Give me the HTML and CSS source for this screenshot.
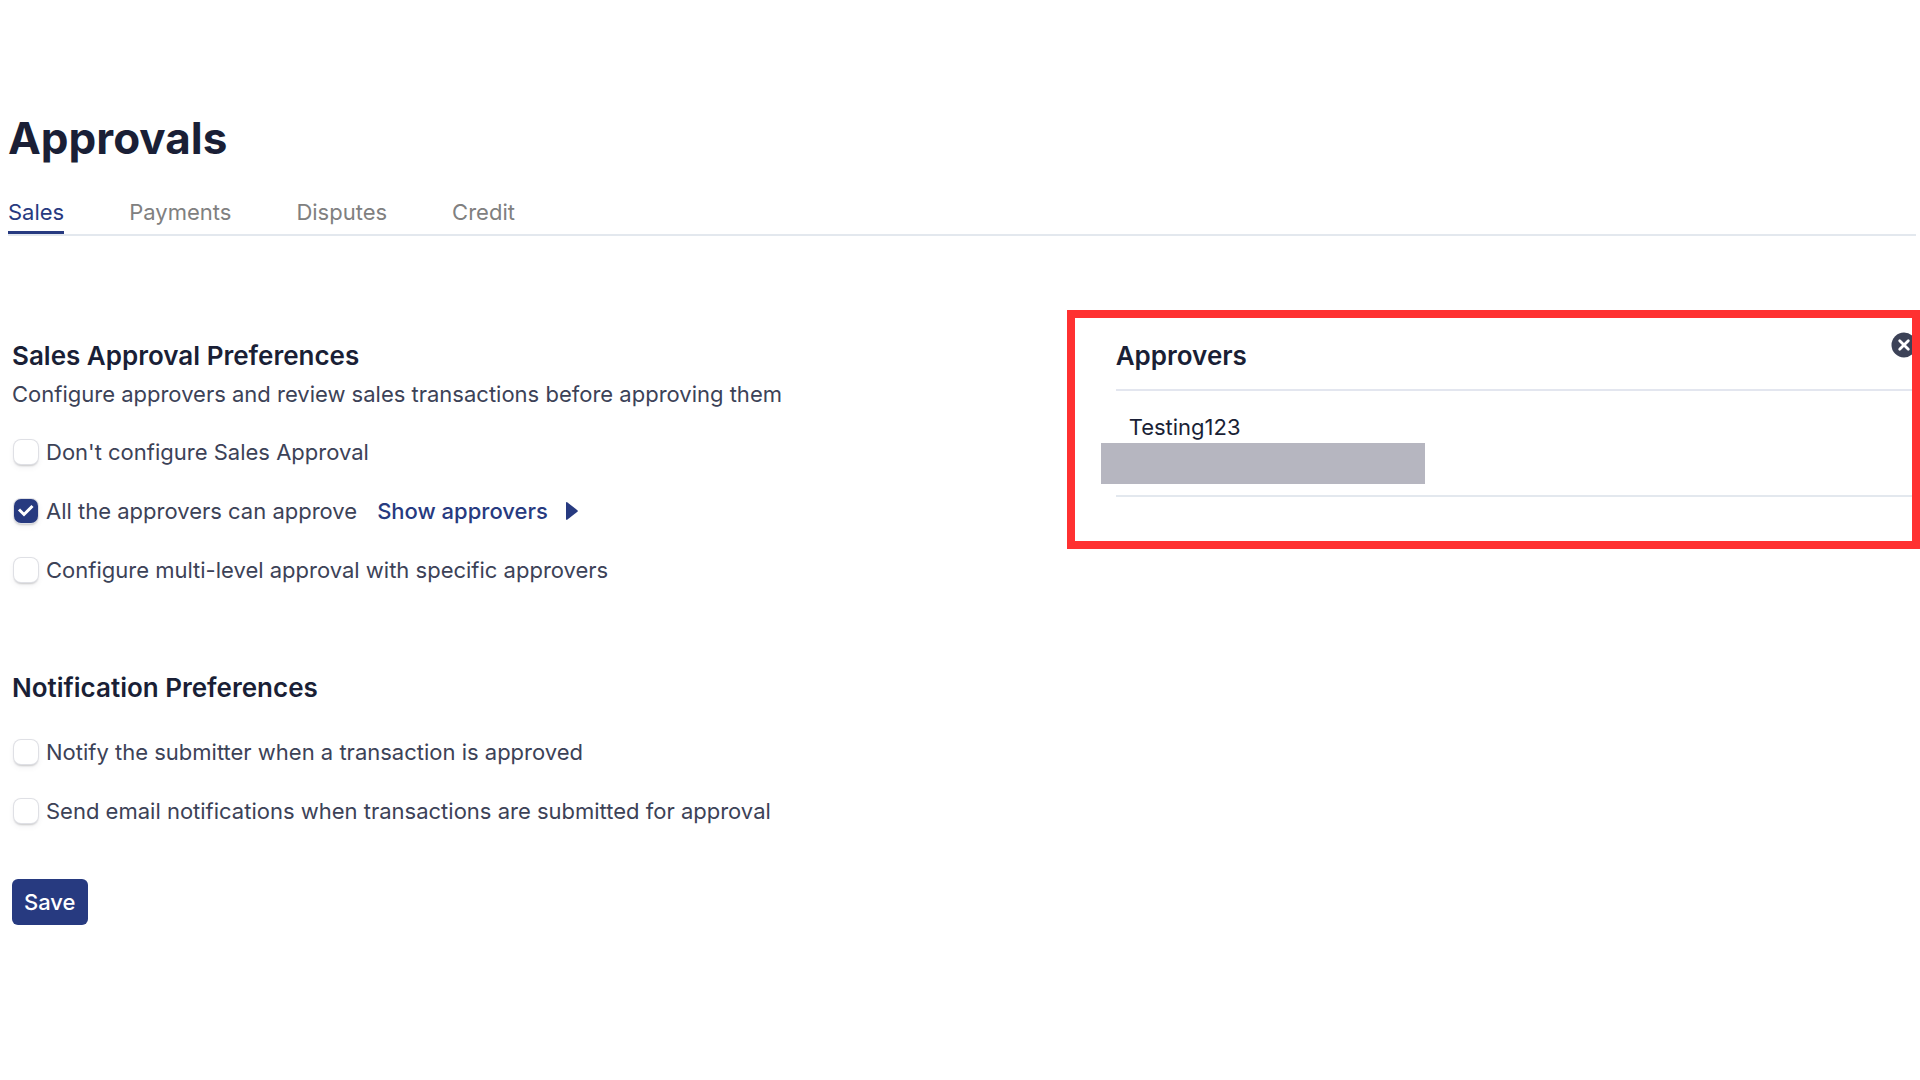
FILE: index.html
```
<!DOCTYPE html>
<html lang="en">

<head>
    <meta charset="UTF-8">
    <meta name="viewport" content="width=device-width, initial-scale=1.0">
    <title>Approvals</title>
    <link rel="stylesheet" href="styles.css">
</head>

<body>
    <header class="page-header">
        <h1>Approvals</h1>
        <nav class="tabs">
            <a class="tab active" href="#sales">Sales</a>
            <a class="tab" href="#payments">Payments</a>
            <a class="tab" href="#disputes">Disputes</a>
            <a class="tab" href="#credit">Credit</a>
        </nav>
    </header>

    <main class="content">
        <form class="preferences" id="preferencesForm">
            <section class="sales">
                <h2>Sales Approval Preferences</h2>
                <p class="description">Configure approvers and review sales transactions before approving them</p>
                <div class="options">
                    <div class="option">
                        <input type="checkbox" id="noApproval">
                        <label for="noApproval">Don't configure Sales Approval</label>
                    </div>
                    <div class="option">
                        <input type="checkbox" id="allApprovers" checked>
                        <label for="allApprovers">All the approvers can approve</label>
                        <button type="button" class="show-approvers">
                            Show approvers
                            <svg width="14" height="20" viewBox="0 0 14 20" aria-hidden="true">
                                <path d="M1 2.2Q1 .4 2.5 1.5L12.4 9.2Q13.4 10 12.4 10.8L2.5 18.5Q1 19.6 1 17.8Z" fill="currentColor" />
                            </svg>
                        </button>
                    </div>
                    <div class="option">
                        <input type="checkbox" id="multiLevel">
                        <label for="multiLevel">Configure multi-level approval with specific approvers</label>
                    </div>
                </div>
            </section>

            <section class="notifications">
                <h2>Notification Preferences</h2>
                <div class="options">
                    <div class="option">
                        <input type="checkbox" id="notifySubmitter">
                        <label for="notifySubmitter">Notify the submitter when a transaction is approved</label>
                    </div>
                    <div class="option">
                        <input type="checkbox" id="sendEmail">
                        <label for="sendEmail">Send email notifications when transactions are submitted for approval</label>
                    </div>
                </div>
            </section>

            <button type="submit" class="save">Save</button>
        </form>

        <aside class="approvers">
            <div class="approvers-header">
                <h2>Approvers</h2>
                <button type="button" class="close" aria-label="Close">
                    <svg width="26" height="26" viewBox="0 0 26 26" aria-hidden="true">
                        <circle cx="13" cy="13" r="12.5" fill="#3c4257" />
                        <path d="M8.7 8.7l8.6 8.6M17.3 8.7l-8.6 8.6" stroke="#fff" stroke-width="2.8" stroke-linecap="round" />
                    </svg>
                </button>
            </div>
            <div class="approver">
                <div class="approver-name">Testing123</div>
                <div class="approver-email"></div>
            </div>
        </aside>
    </main>
</body>

</html>
```
FILE: styles.css
```
* {
    box-sizing: border-box;
}

body {
    margin: 0;
    padding-top: 110px;
    font-family: Inter, "Liberation Sans", sans-serif;
    font-size: 22px;
    line-height: 30px;
    color: #3c4257;
    background-color: #fff;
}

h1,
h2,
p {
    margin: 0;
}

h1 {
    font-size: 44px;
    line-height: 56px;
    font-weight: 700;
    color: #1a1f36;
}

h2 {
    font-size: 26px;
    line-height: 32px;
    font-weight: 600;
    color: #1a1f36;
}

button {
    padding: 0;
    border: none;
    background: none;
    font: inherit;
    cursor: pointer;
}

.page-header {
    padding: 0 4px 0 8px;
}

.tabs {
    display: flex;
    gap: 65px;
    margin-top: 23px;
    border-bottom: 2px solid #e3e8ee;
}

.tab {
    padding: 8px 0 4px;
    border-bottom: 3px solid transparent;
    color: #808080;
    text-decoration: none;
}

.tab.active {
    color: #273a80;
    border-bottom-color: #273a80;
}

.content {
    display: grid;
    grid-template-columns: 5fr 4fr;
    align-items: start;
    padding-top: 74px;
}

.preferences {
    padding: 30px 12px;
}

.description {
    margin-top: 7px;
}

.options {
    display: flex;
    flex-direction: column;
    gap: 29px;
    margin-top: 28px;
}

.option {
    display: flex;
    align-items: center;
}

input[type="checkbox"] {
    appearance: none;
    width: 24px;
    height: 24px;
    margin: 0 8px 0 2px;
    border-radius: 7px;
    background-color: #fff;
    box-shadow: 0 0 0 1px #dfe0e5, 0 2px 2px rgba(0, 0, 0, 0.18), 0 3px 6px rgba(60, 66, 87, 0.08);
}

input[type="checkbox"]:checked {
    background: #273a80 url("data:image/svg+xml,%3Csvg xmlns='http://www.w3.org/2000/svg' viewBox='0 0 24 24'%3E%3Cpath d='M5 10.5l5 5 8.5-8.5' fill='none' stroke='white' stroke-width='3'/%3E%3C/svg%3E");
}

.show-approvers {
    display: flex;
    align-items: center;
    gap: 17px;
    margin-left: 20px;
    font-weight: 500;
    color: #273a80;
}

.notifications {
    margin-top: 87px;
}

.notifications .options {
    margin-top: 33px;
}

.save {
    margin-top: 53px;
    padding: 8px 12px;
    border-radius: 6px;
    font-weight: 500;
    color: #fff;
    background-color: #273a80;
}

.approvers {
    padding: 14px 0 44px 41px;
    border: 8px solid #ff3131;
    overflow: hidden;
}

.approvers-header {
    display: flex;
    justify-content: space-between;
    align-items: flex-start;
    padding-bottom: 17px;
    border-bottom: 2px solid #e3e6ef;
}

.approvers-header h2 {
    margin-top: 8px;
}

.close {
    height: 26px;
    margin-right: -5px;
}

.close svg {
    display: block;
}

.approver {
    padding: 21px 0 11px;
    border-bottom: 2px solid #e3e8ee;
}

.approver-name {
    padding-left: 13px;
    color: #1a1f36;
}

/* hidden email */
.approver-email {
    width: 324px;
    height: 41px;
    margin-top: 1px;
    margin-left: -15px;
    background-color: #b6b6c0;
}
```
